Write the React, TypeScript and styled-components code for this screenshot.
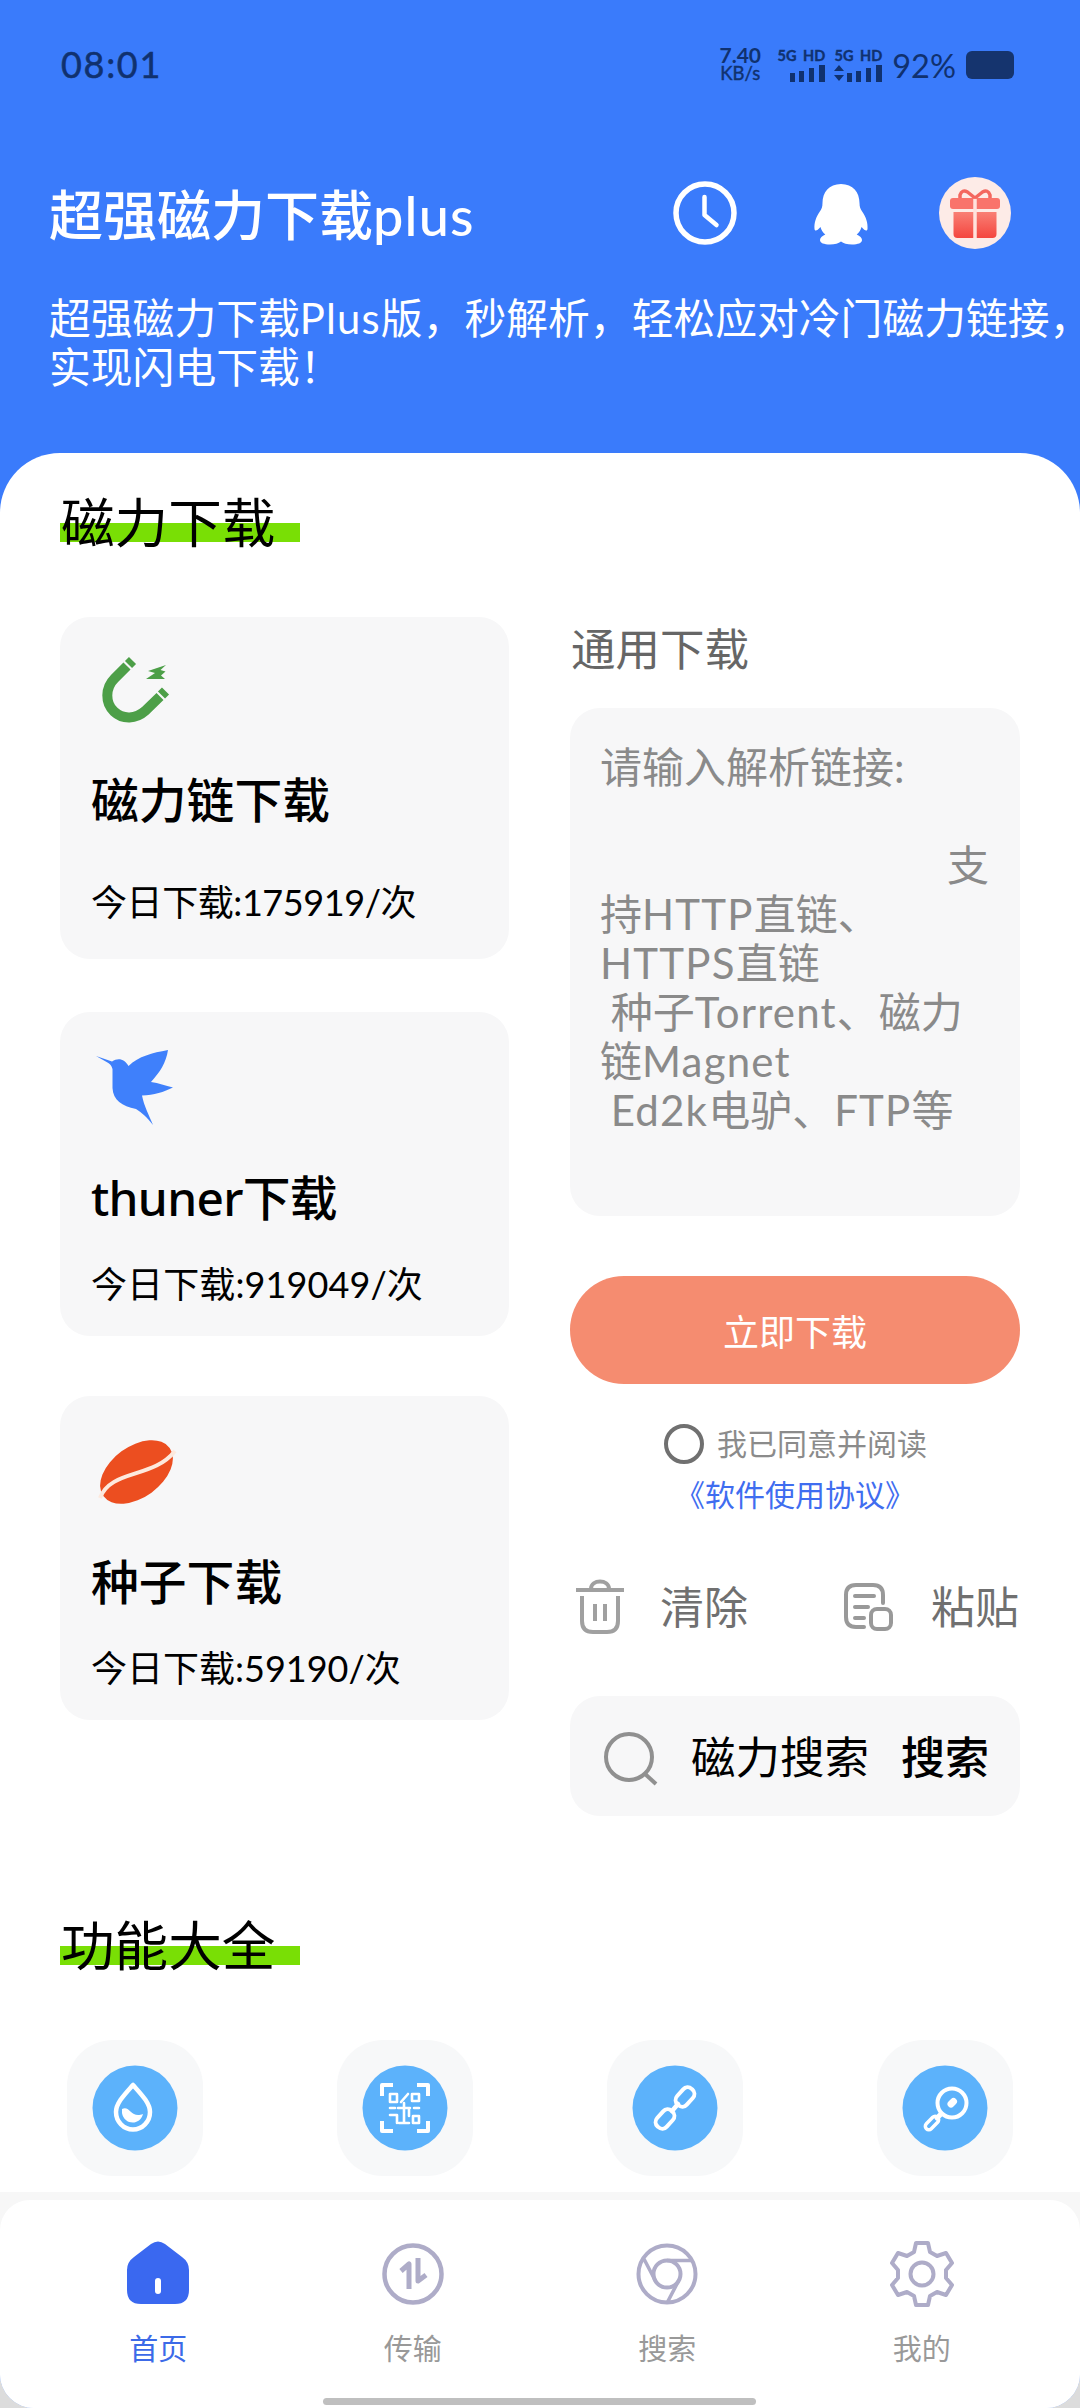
import React from "react";
import styled, { createGlobalStyle } from "styled-components";

const cjk = `"Noto Sans CJK SC", sans-serif`;
const noto = `"Noto Sans", ${cjk}`;
const lato = `Lato, ${cjk}`;

const Global = createGlobalStyle`
  * { box-sizing: border-box; }
  body { margin: 0; background: #dcdcdc; font-family: ${lato}; }
  button { font: inherit; border: 0; background: none; padding: 0; cursor: pointer; }
`;

const Screen = styled.div`
  width: 1080px;
  height: 2408px;
  display: flex;
  flex-direction: column;
  overflow: hidden;
  background: #3a7bfb;
  border-radius: 0 0 34px 34px;
`;

const StatusBar = styled.div`
  height: 128px;
  padding: 0 66px 0 61px;
  display: flex;
  justify-content: space-between;
  align-items: center;
  color: #10316f;
`;
const Clock = styled.span`
  font-size: 36px;
  letter-spacing: 1.7px;
  -webkit-text-stroke: 0.5px currentColor;
`;
const StatusRight = styled.div`
  display: flex;
  align-items: center;
  height: 50px;
`;
const Speed = styled.div`
  width: 50px;
  font-size: 21px;
  line-height: 19px;
  font-weight: 700;
  text-align: center;
`;
const SpeedUnit = styled.div`
  font-size: 18.5px;
  line-height: 19px;
  font-weight: 400;
  -webkit-text-stroke: 0.4px currentColor;
`;
const Signal = styled.div`
  width: 50px;
  margin-left: 10px;
  display: flex;
  flex-direction: column;
  align-items: flex-end;
  & + & { margin-left: 7px; }
`;
const SignalLabel = styled.span`
  font-size: 14.5px;
  line-height: 17px;
  font-weight: 700;
  white-space: nowrap;
  word-spacing: 3px;
  -webkit-text-stroke: 0.4px currentColor;
`;
const Percent = styled.span`
  margin: 4px 10px 0 10px;
  font-size: 32.5px;
  line-height: 30px;
`;
const Battery = styled.div`
  width: 48px;
  height: 28px;
  margin-top: 2px;
  border-radius: 6px;
  background: #15346e;
`;

const Header = styled.header`
  height: 325px;
  padding-left: 49px;
  color: #fff;
  flex: none;
`;
const HeaderTop = styled.div`
  height: 170px;
  padding-right: 69px;
  display: flex;
  align-items: center;
`;
const AppTitle = styled.h1`
  margin: 6px auto 0 0;
  font: 500 54px/70px ${lato};
`;
const HeaderActions = styled.div`
  display: flex;
  align-items: center;
  gap: 73px;
`;
const Tagline = styled.p`
  margin: -6px 0 0;
  font: 400 41.8px/49px ${lato};
  white-space: nowrap;
`;
const HalfWidth = styled.span`
  font-family: ${cjk};
  font-feature-settings: "halt";
`;

const Sheet = styled.main`
  flex: 1;
  min-height: 0;
  background: #fff;
  border-radius: 60px 60px 0 0;
  display: flex;
  flex-direction: column;
`;
const SectionTitle = styled.h2`
  flex: none;
  width: 240px;
  height: 64px;
  margin: 38px 0 0 60px;
  padding-left: 1px;
  font: 400 53.6px/58px ${cjk};
  white-space: nowrap;
  color: #000;
  background: linear-gradient(#79df05, #79df05) 0 32px / 240px 19px no-repeat;
`;
const Columns = styled.div`
  display: grid;
  grid-template-columns: 449px 450px;
  column-gap: 61px;
  margin: 62px 0 0 60px;
  height: 1259px;
  flex: none;
`;
const CardList = styled.div`
  display: flex;
  flex-direction: column;
`;
const Card = styled.section<{ $tall?: boolean }>`
  height: ${(p) => (p.$tall ? 342 : 324)}px;
  margin-bottom: ${(p) => (p.$tall ? 53 : 60)}px;
  padding: 30px 0 0 31px;
  border-radius: 30px;
  background: #f7f7f8;
  color: #000;
`;
const CardTitle = styled.h3<{ $tall?: boolean; $tracking: number }>`
  margin: ${(p) => (p.$tall ? 31 : 34)}px 0 0;
  font: 500 47.8px/64px ${noto};
  letter-spacing: ${(p) => p.$tracking}px;
`;
const CardCount = styled.p<{ $tall?: boolean; $tracking: number }>`
  margin: ${(p) => (p.$tall ? 48 : 32)}px 0 0;
  font-size: 36px;
  line-height: 44px;
  letter-spacing: ${(p) => p.$tracking}px;
`;

const Side = styled.div`
  display: flex;
  flex-direction: column;
`;
const SideTitle = styled.h3`
  margin: 0 0 0 1px;
  font: 400 44.5px/60px ${cjk};
  color: #666;
`;
const LinkBox = styled.div`
  height: 508px;
  margin-top: 31px;
  padding: 35px 31px 35px 30px;
  border-radius: 30px;
  background: #f7f7f8;
  color: #8a8a8a;
  font-size: 42px;
  line-height: 49px;
  white-space: pre;
`;
const BoxLine = styled.div<{ $end?: boolean }>`
  height: 49px;
  text-align: ${(p) => (p.$end ? "right" : "left")};
`;
const Latin = styled.span`
  letter-spacing: 1.2px;
`;
const DownloadButton = styled.button`
  && {
    height: 108px;
    margin-top: 60px;
    border-radius: 54px;
    background: #f58c70;
    color: #fff;
    font-size: 36px;
  }
`;
const Agreement = styled.label`
  height: 50px;
  margin: 35px 0 0 94px;
  display: flex;
  align-items: center;
  gap: 13px;
  font-size: 30px;
  line-height: 44px;
  color: #8b8b8b;
`;
const AgreementText = styled.span`
  margin-top: -2px;
`;
const Radio = styled.span`
  width: 40px;
  height: 40px;
  border: 4px solid #707070;
  border-radius: 50%;
`;
const AgreementLink = styled.a`
  height: 54px;
  font-size: 30px;
  line-height: 50px;
  text-align: center;
  color: #3f6df0;
`;
const Tools = styled.div`
  height: 80px;
  margin-top: 44px;
  padding-right: 1px;
  display: flex;
  align-items: center;
  justify-content: space-between;
`;
const Tool = styled.button<{ $gap: number }>`
  display: flex;
  align-items: center;
  && { font-size: 44px; line-height: 60px; }
  color: #707070;
  gap: ${(p) => p.$gap}px;
`;
const SearchBox = styled.div`
  height: 120px;
  margin-top: 49px;
  padding: 2px 31px 0 29px;
  border-radius: 30px;
  background: #f7f7f8;
  display: flex;
  align-items: center;
  font-size: 44.5px;
  line-height: 60px;
  color: #000;
`;
const SearchText = styled.span`
  margin: 0 auto 0 32px;
`;
const SearchGo = styled.button`
  && { font-size: 44px; font-weight: 500; }
  color: #000;
`;

const Features = styled.div`
  flex: none;
  height: 140px;
  display: grid;
  grid-template-columns: repeat(4, 270px);
  justify-items: center;
  margin-top: 62px;
`;
const Tile = styled.div`
  width: 136px;
  height: 136px;
  border-radius: 46px;
  background: #f7f8f9;
  display: grid;
  place-items: center;
`;

const TabArea = styled.div`
  height: 216px;
  flex: none;
  padding-top: 8px;
  background: #f7f7f7;
`;
const TabBar = styled.nav`
  position: relative;
  height: 208px;
  padding: 38px 31px 0;
  border-radius: 30px 30px 0 0;
  background: #fff;
  display: grid;
  grid-template-columns: repeat(4, 1fr);
`;
const Tab = styled.button<{ $active?: boolean }>`
  height: 132px;
  display: flex;
  flex-direction: column;
  align-items: center;
  gap: 18px;
  && { font-size: 29px; line-height: 42px; }
  color: ${(p) => (p.$active ? "#3c6ae8" : "#999")};
`;
const HomeIndicator = styled.div`
  position: absolute;
  left: 323px;
  bottom: 3px;
  width: 433px;
  height: 7px;
  border-radius: 4px;
  background: #bfbfbf;
`;

const Bars = ({ arrows }: { arrows?: boolean }) => (
  <svg width="50" height="18" viewBox="0 0 50 18" fill="currentColor">
    {arrows && <path d="M3 7l5-6 5 6zM3 11h10l-5 6z" transform="translate(-1 0)" />}
    <path d="M15 9h5v9h-5zM24 7h5v11h-5zM34 4h5v14h-5zM44 1h6v17h-6z" />
  </svg>
);

const ClockSvg = styled.svg`
  margin-right: 6px;
`;
const ClockIcon = () => (
  <ClockSvg width="64" height="64" viewBox="0 0 64 64" fill="none" stroke="#fff" strokeLinecap="round" strokeLinejoin="round">
    <circle cx="32" cy="32" r="29" strokeWidth="5.500" />
    <path d="M31.500 16v18l12 10" strokeWidth="4.500" />
  </ClockSvg>
);
const PenguinSvg = styled.svg`
  margin: 2px 0 0 -3px;
`;
const PenguinIcon = () => (
  <PenguinSvg width="56" height="62" viewBox="0 0 56 62" fill="#fff">
    <path d="M28 1C16 1 9.500 9.500 9.500 20c0 4-1 6-3 9C3 34 1 40 1.500 46c.5 2.500 2.500 2 6-2 .8 3 2.500 5.500 4.800 7.500C9 53 7 55 7 57c0 3 4 4.500 10 4.500 5 0 8.500-1.200 11-3 2.500 1.800 6 3 11 3 6 0 10-1.500 10-4.500 0-2-2-4-5.300-5.500 2.300-2 4-4.500 4.800-7.500 3.500 4 5.500 4.500 6 2C55 40 53 34 49.500 29c-2-3-3-5-3-9C46.500 9.500 40 1 28 1z" />
  </PenguinSvg>
);
const GiftSvg = styled.svg`
  margin-left: -3px;
`;
const GiftIcon = () => (
  <GiftSvg width="72" height="72" viewBox="0 0 72 72">
    <defs>
      <linearGradient id="gift" x1="0" y1="0" x2="0" y2="1">
        <stop offset="0" stopColor="#f97f75" />
        <stop offset="1" stopColor="#f4463f" />
      </linearGradient>
    </defs>
    <circle cx="36" cy="36" r="36" fill="#fdebe7" />
    <path d="M36 21L28.500 15Q23 12 21 18v4M36 21l7.500-6Q49 12 51 18v4" fill="none" stroke="#f4675f" strokeWidth="3.500" strokeLinejoin="round" />
    <rect x="11" y="21" width="50" height="11" rx="3" fill="#f9736b" />
    <path d="M14.500 35h43v22a4 4 0 0 1-4 4h-35a4 4 0 0 1-4-4z" fill="url(#gift)" />
    <path d="M36 22v39" stroke="#ffe2dd" strokeWidth="3.500" />
  </GiftSvg>
);

const CardIcon = styled.svg`
  display: block;
  width: 90px;
  height: 90px;
`;
const MagnetIcon = () => (
  <CardIcon viewBox="0 0 90 90" fill="none">
    <g stroke="#4d9f48" strokeWidth="10">
      <path d="M36 19L23.500 31.500C14 41 14 56 23 64.500 32 73 45 72 54 64L69 49.500" />
      <path d="M37.500 17.500l4-4M70.500 48l4-4" />
    </g>
    <path d="M75 18L57 24l7 2-9 6h19l-4-3.500 4.500-4-5-1.500z" fill="#4d9f48" />
  </CardIcon>
);
const BirdIcon = () => (
  <CardIcon viewBox="0 -3 90 90" fill="#3f80fb">
    <path d="M5 11l16 5.500c7-4.500 13-1.500 16.500 4.500C48 11 61 8 77 5 75 18 69 27 60 37c8 1 14 3.500 22 5.500-9 4.500-19 7.500-31 8C53 61 58 70 62 80 56 72 51 68 45 64 31 61 22 55 21.500 43V24c-1-3-1.500-4.500-5-6.500z" />
  </CardIcon>
);
const SeedIcon = () => (
  <CardIcon viewBox="0 0 90 90">
    <ellipse cx="45.500" cy="46" rx="41" ry="25.500" transform="rotate(-36 45.500 46)" fill="#ec4e20" />
    <path d="M9 72C20 43 62 53 84 25" fill="none" stroke="#fde9dd" strokeWidth="4" />
  </CardIcon>
);

const TrashIcon = () => (
  <svg width="60" height="60" viewBox="0 0 60 60" fill="none" stroke="#a0a0a0" strokeWidth="4">
    <path d="M6 13h48M21 12c0-10 18-10 18 0M12 19v25q0 11 11 11h14q11 0 11-11V19M25 27v17M35 27v17" />
  </svg>
);
const PasteIcon = () => (
  <svg width="56" height="56" viewBox="0 0 56 56" fill="none" stroke="#999" strokeWidth="4" strokeLinecap="round">
    <path d="M24 48H16Q6 48 6 38V16Q6 6 16 6H33Q43 6 43 16V24M15 17H34M15 28H28M15 39H24" />
    <rect x="31" y="30" width="20" height="20" rx="6" />
  </svg>
);
const SearchIcon = () => (
  <svg width="60" height="60" viewBox="0 0 60 60" fill="none" stroke="#909090" strokeWidth="4">
    <circle cx="30" cy="30" r="23" />
    <path d="M45 46l12 11" />
  </svg>
);

const FeatureSvg = ({ children }: { children: React.ReactNode }) => (
  <svg width="86" height="86" viewBox="0 0 86 86" fill="none" stroke="#fff" strokeWidth="3.500" strokeLinecap="round" strokeLinejoin="round">
    <circle cx="43" cy="43" r="42.500" fill="#5cb2fb" stroke="none" />
    {children}
  </svg>
);
const DropIcon = () => (
  <FeatureSvg>
    <path d="M41 20C33 29 24 38 24 47a17 17.500 0 0 0 34 0C58 38 49 29 41 20z" strokeWidth="4.500" />
    <path d="M30 44c8-4 9 10 21 5-3 12-19 11-21-1z" fill="#fff" stroke="none" />
  </FeatureSvg>
);
const QrIcon = () => (
  <FeatureSvg>
    <path d="M20 31V20h11M55 20h11v11M66 56v10H55M31 66H20V56" strokeWidth="4" strokeLinecap="butt" />
    <path d="M28 29h7v8h-7zM50 29h7v7h-7zM51 51h6v7h-6zM46 29l-7 8M28 43h5M28 50h7v8M36 43h12M42 38v20M37 58h10M47 43v8M52 43h5" strokeWidth="2.600" />
  </FeatureSvg>
);
const ChainIcon = () => (
  <FeatureSvg>
    <rect x="-6.500" y="-10.500" width="13" height="21" rx="6" transform="translate(53 32) rotate(42)" strokeWidth="4" />
    <rect x="-6.500" y="-10.500" width="13" height="21" rx="6" transform="translate(33 54) rotate(42)" strokeWidth="4" />
    <path d="M40 46l6-7" strokeWidth="4.500" />
  </FeatureSvg>
);
const MagnifierIcon = () => (
  <FeatureSvg>
    <circle cx="50" cy="38" r="14.500" strokeWidth="4" />
    <path d="M39 49l-4 4" strokeWidth="5" />
    <rect x="-3.500" y="-8" width="7" height="16" rx="3.500" transform="translate(30 58) rotate(45)" />
    <path d="M49 39l2.500-2.500" strokeWidth="7" />
  </FeatureSvg>
);

const HomeIcon = () => (
  <svg width="72" height="72" viewBox="0 0 72 72">
    <path d="M29 6q7-5 14 0l17 13q7 5 7 13v20q0 14-14 14H19Q5 66 5 52V32q0-8 7-13z" fill="#3a68f0" />
    <path d="M36 43v10" stroke="#fff" strokeWidth="6" strokeLinecap="round" />
  </svg>
);
const tabStroke = { fill: "none", stroke: "#aeacc8", strokeWidth: 4, strokeLinejoin: "round" as const };
const TransferIcon = () => (
  <svg width="72" height="72" viewBox="0 0 72 72" {...tabStroke}>
    <circle cx="36" cy="36" r="28.500" strokeWidth="4.500" />
    <path d="M24 33l8-7v25M41 20v23l8-6" strokeWidth="5" />
  </svg>
);
const BrowserIcon = () => (
  <svg width="72" height="72" viewBox="0 0 72 72" {...tabStroke}>
    <circle cx="36" cy="36" r="28.500" />
    <circle cx="36" cy="36" r="13.500" />
    <path d="M36 22.500h24M24.500 43L13 21M47.500 43L36 65" strokeWidth="3.500" />
  </svg>
);
const GearIcon = () => (
  <svg width="72" height="72" viewBox="0 0 72 72" {...tabStroke}>
    <path d="M30 5h12l2 9 7 4 9-3 6 10-6 7v8l6 7-6 10-9-3-7 4-2 9H30l-2-9-7-4-9 3L6 47l6-7v-8l-6-7 6-10 9 3 7-4z" />
    <circle cx="36" cy="36" r="11.500" />
  </svg>
);

const cards = [
  { title: "磁力链下载", titleTracking: 0, count: "今日下载:175919/次", countTracking: -0.42, icon: <MagnetIcon />, tall: true },
  { title: "thuner下载", titleTracking: -0.7, count: "今日下载:919049/次", countTracking: 0.1, icon: <BirdIcon /> },
  { title: "种子下载", titleTracking: 0, count: "今日下载:59190/次", countTracking: 0, icon: <SeedIcon /> },
];
const hint = [
  "请输入解析链接:",
  "",
  "支",
  "持HTTP直链、",
  "HTTPS直链",
  " 种子Torrent、磁力",
  "链Magnet",
  " Ed2k电驴、FTP等",
];
const tabs = [
  { label: "首页", icon: <HomeIcon />, active: true },
  { label: "传输", icon: <TransferIcon /> },
  { label: "搜索", icon: <BrowserIcon /> },
  { label: "我的", icon: <GearIcon /> },
];

const withLatin = (line: string) =>
  line.split(/([A-Za-z0-9]+)/).map((part, i) => (i % 2 ? <Latin key={i}>{part}</Latin> : part));

export default function App() {
  return (
    <>
      <Global />
      <Screen>
        <StatusBar>
          <Clock>08:01</Clock>
          <StatusRight>
            <Speed>
              7.40
              <SpeedUnit>KB/s</SpeedUnit>
            </Speed>
            <Signal>
              <SignalLabel>5G HD</SignalLabel>
              <Bars />
            </Signal>
            <Signal>
              <SignalLabel>5G HD</SignalLabel>
              <Bars arrows />
            </Signal>
            <Percent>92%</Percent>
            <Battery />
          </StatusRight>
        </StatusBar>
        <Header>
          <HeaderTop>
            <AppTitle>{withLatin("超强磁力下载plus")}</AppTitle>
            <HeaderActions>
              <ClockIcon />
              <PenguinIcon />
              <GiftIcon />
            </HeaderActions>
          </HeaderTop>
          <Tagline>
            {withLatin("超强磁力下载Plus版，秒解析，轻松应对冷门磁力链接")}
            <HalfWidth>，</HalfWidth>
            <br />
            实现闪电下载！
          </Tagline>
        </Header>
        <Sheet>
          <SectionTitle>磁力下载</SectionTitle>
          <Columns>
            <CardList>
              {cards.map((c) => (
                <Card key={c.title} $tall={c.tall}>
                  {c.icon}
                  <CardTitle $tall={c.tall} $tracking={c.titleTracking}>{c.title}</CardTitle>
                  <CardCount $tall={c.tall} $tracking={c.countTracking}>{c.count}</CardCount>
                </Card>
              ))}
            </CardList>
            <Side>
              <SideTitle>通用下载</SideTitle>
              <LinkBox>
                {hint.map((line, i) => (
                  <BoxLine key={i} $end={line === "支"}>
                    {withLatin(line)}
                  </BoxLine>
                ))}
              </LinkBox>
              <DownloadButton>立即下载</DownloadButton>
              <Agreement>
                <Radio />
                <AgreementText>我已同意并阅读</AgreementText>
              </Agreement>
              <AgreementLink>《软件使用协议》</AgreementLink>
              <Tools>
                <Tool $gap={30}>
                  <TrashIcon />
                  清除
                </Tool>
                <Tool $gap={35}>
                  <PasteIcon />
                  粘贴
                </Tool>
              </Tools>
              <SearchBox>
                <SearchIcon />
                <SearchText>磁力搜索</SearchText>
                <SearchGo>搜索</SearchGo>
              </SearchBox>
            </Side>
          </Columns>
          <SectionTitle>功能大全</SectionTitle>
          <Features>
            <Tile><DropIcon /></Tile>
            <Tile><QrIcon /></Tile>
            <Tile><ChainIcon /></Tile>
            <Tile><MagnifierIcon /></Tile>
          </Features>
        </Sheet>
        <TabArea>
          <TabBar>
            {tabs.map((t) => (
              <Tab key={t.label} $active={t.active}>
                {t.icon}
                {t.label}
              </Tab>
            ))}
            <HomeIndicator />
          </TabBar>
        </TabArea>
      </Screen>
    </>
  );
}
